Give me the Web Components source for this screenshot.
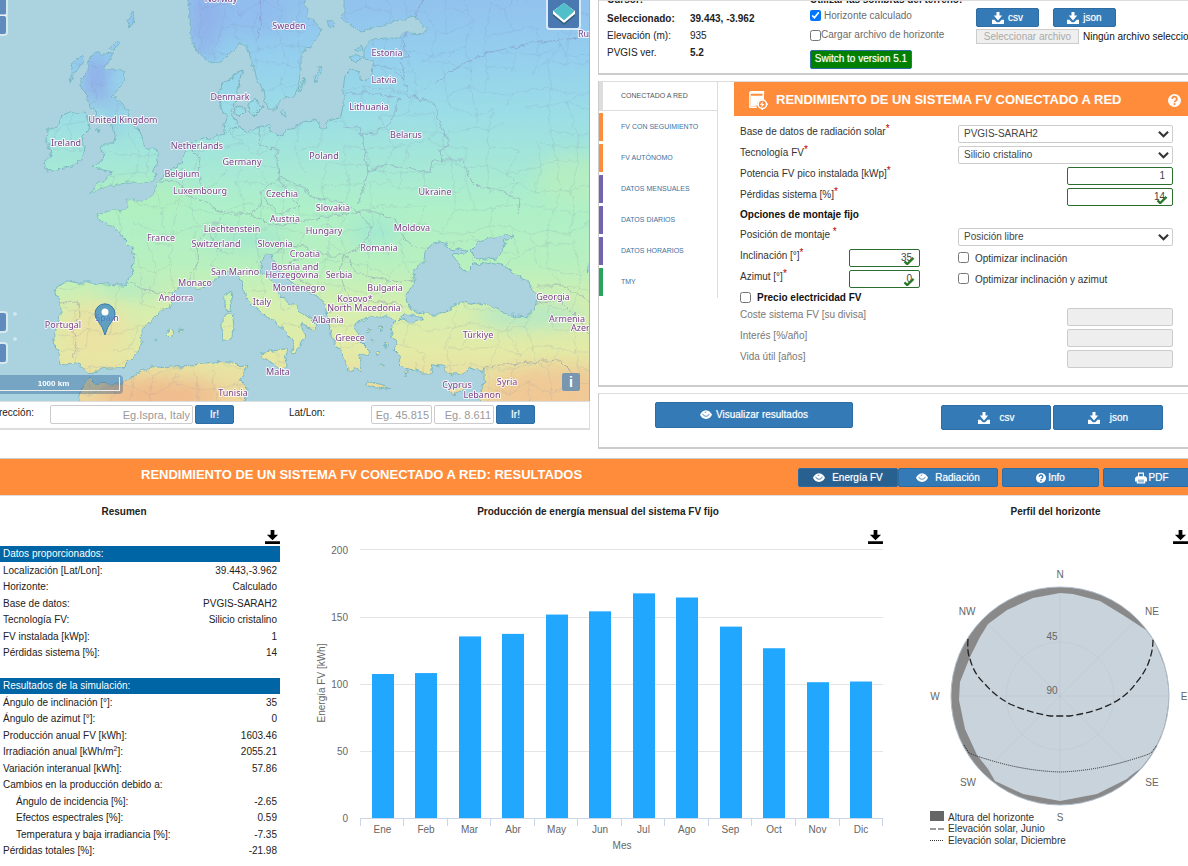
<!DOCTYPE html>
<html lang="es">
<head>
<meta charset="utf-8">
<title>PVGIS - Rendimiento de un sistema FV conectado a red</title>
<style>
  body { margin: 0; background: #fff; color: #222; font: 10px/14px "Liberation Sans", Arial, sans-serif; overflow-x: hidden; }
</style>
</head>
<body>
<pv-app></pv-app>
<script>
const define = (name, css, html, setup) => {
  const template = document.createElement('template');
  template.innerHTML = `<style>*{box-sizing:border-box}:host{display:block}${css}</style>${html}`;
  customElements.define(name, class extends HTMLElement {
    constructor() {
      super();
      this.attachShadow({ mode: 'open' }).append(template.content.cloneNode(true));
    }
    connectedCallback() { if (setup) setup(this, this.shadowRoot); }
  });
};

const ICONS = {
  tray: ['0 0 20 20', '<path d="M7.500 0h5v6H17l-7 8-7-8h4.500zM0 13h4l4 4h4l4-4h4v7H0z"/>'],
  save: ['0 0 16 15', '<path d="M6 0h4v5h4l-6 6-6-6h4zM0 12h16v3H0z"/>'],
  eye: ['0 0 20 20', '<path d="M10 2C5 2 1.500 6 0 9.500c1.500 3.500 5 7 10 7s8.500-3.500 10-7C18.500 6 15 2 10 2z"/><path d="M4.500 8a5.700 5.700 0 0 0 11 0M8 6.500a2.500 2.500 0 0 1 2.500-1.500" fill="none" stroke="var(--cut,#337ab7)" stroke-width="1.300"/>'],
  help: ['0 0 20 20', '<circle cx="10" cy="10" r="10"/><path d="M6.500 7.500a3.500 3.500 0 1 1 5 3.200q-1.500.8-1.500 2" fill="none" stroke="var(--cut,#337ab7)" stroke-width="2.800"/><circle cx="10" cy="15.500" r="1.700" fill="var(--cut,#337ab7)"/>'],
  print: ['0 0 20 20', '<path fill-rule="evenodd" d="M5 1h10v6h2l3 3v6h-3v3H3v-3H0v-6l3-3h2zM7 3v4h6V3zM5 13v1h10v-1zM5 16v1h10v-1z"/>'],
  chevron: ['0 0 12 8', '<path d="M1 1.500l5 5 5-5" fill="none" stroke="currentColor" stroke-width="2.200"/>'],
  check: ['0 0 12 10', '<path d="M1 6l3 3 7-7" fill="none" stroke="#2b7a2b" stroke-width="2.600"/>'],
  system: ['0 0 20 20', '<path d="M1 1h14v8M1 1v16h7" fill="none" stroke="currentColor" stroke-width="1.600"/><path d="M1 0h15v3H1zM2 5h13v3.500A7 7 0 0 0 8 16H2z"/><circle cx="14" cy="14" r="4.500" fill="none" stroke="currentColor" stroke-width="1.600"/><path d="M14.500 11l-3 3.600h2l-.6 3 3.300-4h-2z"/><path d="M14 8v2M14 18v2M8 14h2M18 14h2" stroke="currentColor" stroke-width="1.600"/>'],
  layers: ['0 0 30 30', '<path d="M4 16l11 9 11-9v-3l-11-8L4 13z" fill="#fff"/><path d="M4 17l11 9 11-9" fill="none" stroke="#37627c" stroke-width="1.400"/><path d="M5 13l9-7q1-1 2 0l9 7-9 8q-1 1-2 0z" fill="#50bfc9" stroke="#50bfc9" stroke-linejoin="round"/>']
};
define('pv-icon', ':host{display:inline-block;width:12px;height:12px;flex:none}svg{display:block;width:100%;height:100%;fill:currentColor}', '<svg aria-hidden="true"></svg>', (host, root) => {
  const [box, body] = ICONS[host.getAttribute('name')];
  const svg = root.querySelector('svg');
  svg.setAttribute('viewBox', box);
  svg.innerHTML = body;
});

define('pv-button', `
  :host{height:19px}
  button{display:flex;align-items:center;justify-content:center;gap:var(--gap,4px);width:100%;height:100%;margin:0;padding:0;
    border:1px solid #2e6da4;border-radius:2px;background:var(--fill,#337ab7);color:#fff;font:inherit;white-space:nowrap;cursor:pointer;text-shadow:0 0 1px #fff9}`,
  '<button type="button"><slot></slot></button>');

define('pv-panel', ':host{border:1px solid #ddd;border-bottom:2px solid #ccc;border-left-color:#ccc;border-right:0;overflow:hidden}', '<slot></slot>');

/* ---------- map ---------- */
const SEA = '#aad3df';
const MAINLAND = 'M188-5L190 10 189 25 192 35 192 43 196 50 203 59 213 64 222 61 230 53 241 42 244 44 248 50 252 62 256 75 262 88 263 92 265 102 267 109 276 109 278 103 284 97 294 96 298 86 301 70 301 55 305 50 312 45 318 38 322 30 316 22 307 16 306-5H344L344 12 340 18 350 25 360 32 375 27 395 22 413 16 420 24 428 29 425 33 407 32 400 38 385 38 370 40 364 50 364 57 373 62 372 75 367 82 361 80 357 72 351 70 345 76 343 90 343 105 341 115 330 120 325 127 320 127 315 120 303 122 290 129 280 134 277 136 270 130 268 124 258 127 248 133 240 128 235 122 232 112 219 108 219 92 222 83 232 78 236 72 242 70 240 86 235 92 233 104 232 112 226 117 224 128 225 134 215 137 205 139 196 141 188 146 183 158 178 167 170 170 163 178 157 181 156 190 152 195 144 201 134 203 133 200 126 199 127 208 122 211 114 209 108 212 98 213 97 218 104 223 112 226 121 234 124 240 131 247 133 260 132 270 130 280 126 285 118 285 108 284 90 283 78 283 68 281 62 284 54 289 56 296 60 303 60 315 57 328 53 343 57 347 59 363 68 364 75 362 82 366 88 375 97 370 108 368 122 368 134 356 143 344 140 338 144 328 156 315 170 307 173 300 172 292 180 286 190 287 200 289 214 281 222 275 232 272 238 275 243 290 251 303 262 312 273 320 285 330 292 340 295 347 291 353 297 352 304 338 301 324 309 328 316 330 317 325 312 320 300 311 294 304 288 303 278 291 272 280 262 272 260 262 265 256 272 254 273 260 280 270 290 281 305 290 318 296 325 304 327 318 331 330 333 340 336 346 345 360 347 368 352 370 356 368 360 373 361 362 358 354 368 357 370 351 361 342 355 330 357 322 365 320 375 317 388 317 397 320 392 325 391 335 396 345 393 350 398 355 400 363 405 368 415 370 420 373 430 373 432 366 442 367 452 375 462 374 470 367 482 371 484 368 484 380 480 410H600V-5Z';
const JUTLAND = 'M225 134L232 128 240 127 235 120 232 112 234 104 239 96 236 90 241 82 242 71 236 73 233 79 223 82 219 92 220 106 226 117 223 127Z';
const ISLANDS = [
  JUTLAND,
  'M94 53L106 53 113 54 108 62 103 70 115 70 125 71 124 80 118 90 112 97 122 102 127 110 128 120 138 128 142 140 145 149 154 149 159 155 157 163 152 172 156 174 152 180 140 183 128 183 118 184 108 187 96 190 90 194 97 184 105 178 113 172 103 170 92 166 100 162 105 155 100 148 103 144 113 144 115 138 113 130 112 124 97 118 96 110 90 108 88 95 80 87 80 80 88 72 88 63Z',
  'M60 118L66 112 76 113 85 112 90 120 89 130 82 137 84 147 82 160 70 166 58 170 47 172 44 162 52 156 50 150 46 142 47 128 58 126Z',
  'M77 410L82 388 90 377 96 383 110 384 122 384 140 372 155 366 175 367 190 365 205 364 215 363 228 362 235 362 240 367 247 364 243 375 241 380 247 390 244 410Z',
  'M261 353L270 351 288 350 285 358 286 366 282 369 272 362 262 357Z', 'M222 317L232 312 234 325 233 338 223 341 222 325Z', 'M224 297L231 291 232 302 229 311 224 305Z',
  'M365 382L375 383 391 387 380 389 366 385Z', 'M449 389L458 387 468 382 463 390 452 394Z', 'M165 333L171 329 174 333 169 337Z', 'M153 341L157 339 156 342Z', 'M178 328L183 329 179 331Z',
  'M127 20L133 12 134 18 130 28Z', 'M110 47L117 40 118 46 113 51Z', 'M73 62L82 56 83 62 73 76 70 82Z', 'M235 108L242 105 246 111 240 117 236 113Z', 'M248 104L256 98 262 108 254 116 249 112Z', 'M281 112L285 112 285 116 281 115Z', 'M315 75L320 66 322 70 316 82Z', 'M298 90L304 78 301 92Z', 'M349 57L358 53 364 58 354 62Z', 'M355 49L361 45 363 51Z', 'M327 22L333 20 334 25 329 27Z', 'M96 130L101 126 100 131Z',
  'M378 326l6 2-2 3zM384 343l5 2-4 2zM376 352l5 1-3 3zM404 373l5-3-4 7zM380 365l4 1-3 2zM370 340l4 3-3 1zM367 329l4 1-3 2z'
];
const LAKES = [
  'M440 242L447 246 452 251 460 249 468 250 464 253 452 254 459 262 462 270 468 271 474 265 485 263 490 262 500 264 512 271 524 280 533 287 537 300 534 310 525 317 510 315 495 308 480 302 472 304 460 303 450 308 440 314 424 314 410 309 405 296 413 285 415 270 424 262 425 252 433 243Z',
  'M470 251L478 243 490 238 505 235 514 234 506 240 504 250 497 259 485 260 478 259Z', 'M399 319L405 315 416 315 423 318 412 323Z', 'M586 270l5-5v10z'
];
const BORDERS = 'M258 127L260 145 277 150 280 178 260 192 270 205 280 214 300 205 290 195 278 178 M280 178L300 185 315 198 345 203 358 212 M260 192L262 205 250 214 225 214 208 230 215 245 222 252 M225 214L213 207 200 200 186 195 178 182 160 181 M188 146L200 158 198 172 202 190 M208 230L196 245 198 262 190 276 190 287 M130 283L145 290 160 293 172 294 M60 303L78 302 80 315 73 330 77 343 72 358 M250 214L270 225 300 222 315 218 340 215 358 212 372 228 362 245 345 255 325 255 305 247 290 245 272 254 M345 255L352 268 366 276 400 282 413 280 M345 255L340 272 345 290 352 300 328 312 M352 300L380 302 398 303 405 310 M305 258L290 262 300 280 315 288 M358 212L375 212 395 220 405 240 418 250 M358 205L368 172 365 150 360 127 343 126 M345 93L372 93 385 95 400 98 392 120 375 134 362 133 M373 64L390 68 405 78 408 96 432 102 437 115 450 145 440 150 442 160 465 160 468 176 478 186 500 190 520 200 518 215 M368 170L390 165 430 172 432 162 442 160 M408 57L403 42 418 10 425-5 M405 78L400 60 408 57 M435 83L460 65 490 52 540 42 580 38 M256 40L262 20 258-5 M484 368L500 365 530 362 560 360 575 375 M533 305L560 300 575 315 590 335 M537 285L560 285 590 300';
const LABELS = [
  ['Norway',221,2],['Sweden',289,29],['Estonia',387,56],['Latvia',384,83],['Lithuania',369,110],['Belarus',406,138],['United Kingdom',123,123],['Ireland',66,146],['Denmark',230,100],['Netherlands',197,149],['Germany',242,165],['Belgium',182,177],['Luxembourg',200,194],['Poland',324,159],['Ukraine',435,195],['Czechia',282,197],['Slovakia',333,211],['Austria',285,222],['Liechtenstein',232,232],['Hungary',324,234],['Moldova',412,231],['France',161,241],['Switzerland',216,247],['Slovenia',275,247],['Croatia',305,257],['Romania',379,251],['San Marino',235,275],['Bosnia and',295,270],['Herzegovina',292,278],['Serbia',339,278],['Monaco',195,286],['Montenegro',299,291],['Bulgaria',385,291],['Andorra',176,301],['Italy',262,305],['Kosovo*',355,302],['North Macedonia',364,311],['Georgia',553,300],['Spain',107,321],['Portugal',63,328],['Albania',328,323],['Armenia',567,322],['Greece',350,341],['Türkiye',478,338],['Malta',278,375],['Cyprus',457,388],['Syria',507,385],['Lebanon',482,398],['Tunisia',233,396]
];
define('pv-map', `
  :host{position:relative;overflow:hidden;border-right:1px solid #aaa}
  svg.map{display:block;width:100%;height:401px}
  text{font:9px "Noto Sans",sans-serif;fill:#7c3f88;text-anchor:middle;paint-order:stroke;stroke:#fffc;stroke-width:2px;stroke-linejoin:round}
  text.start{text-anchor:start}
  button{position:absolute;display:grid;place-items:center;margin:0;padding:0;border:0;background:#5f8bbd;color:#fff;border-radius:2px;box-shadow:0 0 0 2px #ffffff80;font:bold 14px/14px "Liberation Sans",sans-serif}
  .in{left:-13px;top:-5px;width:19px;height:20px}
  .out{left:-13px;top:16px;width:19px;height:18px}
  .pos{left:-13px;top:313px;width:19px;height:18px}
  .ext{left:-13px;top:344px;width:19px;height:18px}
  .layers{right:10px;top:-2px;width:31px;height:30px;background:#4a78b0;box-shadow:0 0 0 2px #ffffffa0}
  .layers pv-icon{width:30px;height:30px}
  .info{right:9px;top:373px;width:18px;height:18px;background:#7896b0;box-shadow:none}
  .scale{position:absolute;left:0;top:375px;width:123px;height:19px;padding:2px 3px 3px 0;background:#003c884d;border-radius:0 4px 4px 0}
  .scale div{height:14px;padding-right:12px;border:1px solid #eee;border-width:0 1px 1px 0;color:#fff;font:bold 8px/14px "Liberation Sans",sans-serif;text-align:center}`,
  `<svg class="map" viewBox="0 0 589 401" preserveAspectRatio="xMinYMin slice" role="img" aria-label="Mapa de Europa">
    <defs>
      <linearGradient id="heat" x1="0" y1="0" x2="0" y2="401" gradientUnits="userSpaceOnUse">
        <stop offset="0" stop-color="#92c2ee"/><stop offset=".14" stop-color="#94cfee"/><stop offset=".28" stop-color="#9bdde6"/><stop offset=".4" stop-color="#a4e7d8"/>
        <stop offset=".52" stop-color="#aef0c8"/><stop offset=".66" stop-color="#b8f0bf"/><stop offset=".76" stop-color="#d4efb0"/><stop offset=".88" stop-color="#e4eaa6"/><stop offset="1" stop-color="#efd59c"/>
      </linearGradient>
      <filter id="rough" x="-5%" y="-5%" width="110%" height="110%" color-interpolation-filters="sRGB"><feTurbulence type="fractalNoise" baseFrequency=".13" numOctaves="3" seed="4"/><feDisplacementMap in="SourceGraphic" scale="7" xChannelSelector="R" yChannelSelector="G"/></filter>
      <filter id="soft" x="-50%" y="-50%" width="200%" height="200%" color-interpolation-filters="sRGB"><feGaussianBlur stdDeviation="9"/></filter>
      <clipPath id="land"></clipPath>
    </defs>
    <rect width="700" height="401" fill="${SEA}"/>
    <g filter="url(#rough)">
      <g id="shapes" fill="url(#heat)" stroke="#7ab8c2"></g>
      <g clip-path="url(#land)">
        <g filter="url(#soft)">
          <ellipse cx="205" cy="22" rx="14" ry="38" fill="#8fa4e8" opacity=".6"/><ellipse cx="96" cy="80" rx="14" ry="26" fill="#8fa0e8" opacity=".7"/>
          <ellipse cx="250" cy="15" rx="40" ry="20" fill="#8fb2ee" opacity=".4"/><ellipse cx="115" cy="112" rx="9" ry="22" fill="#92b8ec" opacity=".5"/>
          <ellipse cx="245" cy="240" rx="42" ry="7" fill="#8cdcdc" opacity=".6"/><ellipse cx="375" cy="232" rx="26" ry="12" fill="#96e2da" opacity=".6"/>
          <ellipse cx="130" cy="288" rx="34" ry="6" fill="#9de5cf" opacity=".7"/><ellipse cx="530" cy="316" rx="55" ry="12" fill="#a5e6d0" opacity=".7"/>
          <ellipse cx="135" cy="200" rx="60" ry="18" fill="#b2f0bb" opacity=".7"/><ellipse cx="575" cy="180" rx="40" ry="26" fill="#bcf0b8" opacity=".6"/>
          <ellipse cx="95" cy="330" rx="34" ry="28" fill="#f0dea0" opacity=".7"/><ellipse cx="160" cy="395" rx="60" ry="16" fill="#f0b88c" opacity=".9"/><ellipse cx="560" cy="392" rx="70" ry="26" fill="#f0c494" opacity=".8"/>
        </g>
        <path id="mesh" fill="none" stroke="#7d86ad" stroke-opacity=".16"/>
        <path d="${BORDERS}" fill="none" stroke="#8080b0" stroke-opacity=".42"/>
      </g>
      <g id="water" fill="${SEA}" stroke="#7ab8c2"></g>
    </g>
    <g id="labels"></g>
    <text class="start" x="578" y="37">Russia</text><text class="start" x="571" y="331">Azerbaijan</text>
    <path d="M105 335q-2-8-7-14a10 10 0 1 1 14 0q-5 6-7 14z" fill="#3f8dc4" stroke="#3579aa" fill-opacity=".8"/><circle cx="105" cy="312" r="3.500" fill="#fff"/>
    <circle cx="15" cy="314" r="2" fill="#cfe6ee"/><circle cx="15" cy="339" r="2" fill="#cfe6ee"/>
  </svg>
  <button class="in" aria-label="Acercar"></button><button class="out" aria-label="Alejar"></button>
  <button class="pos" aria-label="Mi posición"></button><button class="ext" aria-label="Extensión"></button>
  <button class="layers" aria-label="Capas"><pv-icon name="layers"></pv-icon></button>
  <button class="info" aria-label="Información">i</button>
  <div class="scale"><div>1000 km</div></div>`,
  (host, root) => {
    const $ = id => root.getElementById(id);
    const paths = list => list.map(d => `<path d="${d}"/>`).join('');
    $('shapes').innerHTML = paths([MAINLAND, ...ISLANDS]);
    $('land').innerHTML = paths([MAINLAND, ...ISLANDS]);
    $('water').innerHTML = paths(LAKES);
    $('labels').innerHTML = LABELS.map(([t, x, y]) => `<text x="${x}" y="${y}">${t}</text>`).join('');
    // Province borders: a jittered grid with some edges left out.
    const noise = (i, j, k) => { const v = Math.sin(i * 127.1 + j * 311.7 + k * 74.7) * 43758.5; return v - Math.floor(v); };
    const at = (i, j) => [i * 21 + noise(i, j, 1) * 17, j * 20 + noise(i, j, 2) * 16].map(Math.round).join(' ');
    let d = '';
    for (let i = -1; i < 30; i++) for (let j = -1; j < 21; j++) {
      if (noise(i, j, 3) > .2) d += `M${at(i, j)}L${at(i + 1, j)}`;
      if (noise(i, j, 4) > .3) d += `M${at(i, j)}L${at(i, j + 1)}`;
    }
    $('mesh').setAttribute('d', d);
  });

define('pv-location', `
  form{display:flex;align-items:center;height:29px;padding-bottom:1px;border:1px solid #ddd;border-width:1px 1px 2px 0;color:#222}
  .address{display:flex;justify-content:flex-end;width:34px;margin-right:16px;overflow:hidden;white-space:nowrap;padding-bottom:3px}
  .coords{margin-left:55px;width:82px;padding-bottom:3px}
  input{height:19px;min-width:0;margin:0 2px 0 0;padding:0 2px;border:1px solid #ccc;border-radius:2px;font:11px "Liberation Sans",sans-serif;text-align:right}
  input::placeholder{color:#999;opacity:1}
  pv-button{width:39px}
  .a{width:143px}.b{width:61px}.c{width:60px}`,
  `<form><label class="address" for="a">Dirección:</label><input class="a" id="a" placeholder="Eg.Ispra, Italy"><pv-button>Ir!</pv-button>
  <label class="coords" for="b">Lat/Lon:</label><input class="b" id="b" placeholder="Eg. 45.815"><input class="c" aria-label="Longitud" placeholder="Eg. 8.611"><pv-button>Ir!</pv-button></form>`);

define('pv-status', `
  :host{display:grid;grid-template-columns:83px 120px 166px minmax(0,1fr);margin-top:-11px;padding:0 0 4px 8px;white-space:nowrap}
  dl{display:grid;grid-column:span 2;grid-template:20px repeat(3,17px)/83px 1fr;align-items:center;margin:0;align-content:start}
  dt,dd{margin:0}
  .terrain{display:grid;grid-template-rows:20px 11px 28px 20px;align-items:center;justify-items:start}
  label{display:flex;align-items:center;color:#6b6b6b}
  input{width:11px;height:11px;margin:0}
  .gap{gap:3px}
  .terrain pv-button{width:102px;--fill:#008000}
  .files{padding-top:18px;overflow:hidden}
  .pair{display:flex;gap:14px;margin-bottom:2px}
  .pair pv-button{width:63px}
  .file{display:flex;align-items:center;gap:4px;color:#111}
  .file button{width:103px;height:15px;padding:0;border:1px solid #ccc;background:#efefef;color:#aaa;font:inherit;line-height:12px;flex:none}`,
  `<dl><dt><b>Cursor:</b></dt><dd></dd><dt><b>Seleccionado:</b></dt><dd><b>39.443, -3.962</b></dd><dt>Elevación (m):</dt><dd>935</dd><dt>PVGIS ver.</dt><dd><b>5.2</b></dd></dl>
  <div class="terrain"><b>Utilizar las sombras del terreno:</b>
    <label class="gap"><input type="checkbox" checked>Horizonte calculado</label>
    <label><input type="checkbox">Cargar archivo de horizonte</label>
    <pv-button>Switch to version 5.1</pv-button></div>
  <div class="files"><div class="pair"><pv-button><pv-icon name="tray"></pv-icon>csv</pv-button><pv-button><pv-icon name="tray"></pv-icon>json</pv-button></div>
    <div class="file"><button type="button" disabled>Seleccionar archivo</button><span>Ningún archivo seleccionado</span></div></div>`);

define('pv-tabs', `
  nav{display:flex;flex-direction:column;gap:3px;border-right:1px solid #ddd;padding-bottom:2px}
  a{display:flex;align-items:center;height:28px;padding-left:18px;border-left:5px solid var(--c);border-radius:2px 0 0 2px;color:#44709c;text-decoration:none;font-size:7px;white-space:nowrap}
  a.on{color:#555;border-radius:0;box-shadow:0 1px #ddd}`,
  `<nav><a class="on" href="#red" style="--c:#ddd">CONECTADO A RED</a><a href="#seg" style="--c:#ff8c3b">FV CON SEGUIMIENTO</a><a href="#aut" style="--c:#ff8c3b">FV AUTÓNOMO</a>
  <a href="#men" style="--c:#7464b0">DATOS MENSUALES</a><a href="#dia" style="--c:#7464b0">DATOS DIARIOS</a><a href="#hor" style="--c:#7464b0">DATOS HORARIOS</a><a href="#tmy" style="--c:#28a55a">TMY</a></nav>`);

define('pv-system-form', `
  h2{display:flex;align-items:center;gap:8px;height:34px;margin:0 0 7px;padding:2px 7px 0 15px;background:#ff8c3b;color:#fff;font:bold 13px/16px "Liberation Sans",sans-serif;white-space:nowrap}
  h2 pv-icon{width:19px;height:19px}
  h2 pv-icon:last-child{width:13px;height:13px;margin-left:auto;--cut:#ff8c3b}
  form{display:grid;grid-template-columns:1fr 1fr 215px;grid-template-rows:repeat(4,21px) 19px repeat(3,21px) 17px;grid-auto-rows:21px;align-items:center;padding:0 15px 0 6px;white-space:nowrap}
  label{color:#333}
  .l{padding-bottom:4px}
  .l.w{grid-column:span 2}
  i{position:relative;top:-3px;color:#b00;font-style:normal}
  h3{grid-column:1/-1;margin:0;padding-bottom:4px;font:bold 10px/14px "Liberation Sans",sans-serif;color:#111}
  input:not([type=checkbox]),select{display:block;width:100%;height:18px;margin:0;border:1px solid #ccc;border-radius:2px;background:#fff;color:#444;font:inherit;appearance:none}
  input:not([type=checkbox]){padding:0 7px;text-align:right}
  select{padding:0 5px}
  .box{position:relative}
  .box pv-icon{position:absolute;right:4px;top:5px;width:11px;height:8px;color:#333}
  .box pv-icon[name=check]{right:5px;top:7px;width:12px;height:9px}
  .num{width:106px;justify-self:end}
  .tilt{width:71px}
  .ok input{border-color:#2b6e2f!important}
  input:disabled{background:#eee!important}
  input[type=checkbox]{width:11px;height:11px;margin:0}
  .opt{display:flex;align-items:center;gap:6px}
  .opt span{padding-top:2px}
  .price{grid-column:1/-1;display:flex;gap:6px;align-items:center;font-weight:bold;color:#111;height:14px}
  .muted{color:#777}`,
  `<h2><pv-icon name="system"></pv-icon>RENDIMIENTO DE UN SISTEMA FV CONECTADO A RED<pv-icon name="help"></pv-icon></h2>
  <form>
    <label class="l w" for="db">Base de datos de radiación solar<i>*</i></label><div class="box"><select id="db"><option>PVGIS-SARAH2</option></select><pv-icon name="chevron"></pv-icon></div>
    <label class="l w" for="te">Tecnología FV<i>*</i></label><div class="box"><select id="te"><option>Silicio cristalino</option></select><pv-icon name="chevron"></pv-icon></div>
    <label class="l w" for="po">Potencia FV pico instalada [kWp]<i>*</i></label><div class="box num ok"><input id="po" value="1"></div>
    <label class="l w" for="pe">Pérdidas sistema [%]<i>*</i></label><div class="box num ok"><input id="pe" value="14"><pv-icon name="check"></pv-icon></div>
    <h3>Opciones de montaje fijo</h3>
    <label class="l w" for="mo">Posición de montaje <i>*</i></label><div class="box"><select id="mo"><option>Posición libre</option></select><pv-icon name="chevron"></pv-icon></div>
    <label class="l" for="in">Inclinación [°]<i>*</i></label><div class="box tilt ok"><input id="in" value="35"><pv-icon name="check"></pv-icon></div><label class="opt"><input type="checkbox"><span>Optimizar inclinación</span></label>
    <label class="l" for="az">Azimut [°]<i>*</i></label><div class="box tilt ok"><input id="az" value="0"><pv-icon name="check"></pv-icon></div><label class="opt"><input type="checkbox"><span>Optimizar inclinación y azimut</span></label>
    <label class="price"><input type="checkbox">Precio electricidad FV</label>
    <label class="l w muted" for="co">Coste sistema FV [su divisa]</label><div class="num"><input id="co" disabled></div>
    <label class="l w muted" for="it">Interés [%/año]</label><div class="num"><input id="it" disabled></div>
    <label class="l w muted" for="vi">Vida útil [años]</label><div class="num"><input id="vi" disabled></div>
  </form>`);

define('pv-actions', `
  :host{display:flex;justify-content:space-between;padding:8px 25px 17px 56px}
  .show{width:198px;height:26px}
  div{display:flex;gap:2px;padding-top:3px}
  div pv-button{width:110px;height:25px;--gap:10px}`,
  `<pv-button class="show"><pv-icon name="eye"></pv-icon>Visualizar resultados</pv-button>
  <div><pv-button><pv-icon name="tray"></pv-icon>csv</pv-button><pv-button><pv-icon name="tray"></pv-icon>json</pv-button></div>`);

/* ---------- results ---------- */
define('pv-card', `
  h3{margin:0;padding-right:var(--shift,0);font:bold 10px/32px "Liberation Sans",sans-serif;text-align:center;color:#222}
  div{display:flex;justify-content:flex-end;height:18px;padding:2px var(--inset,0) 0 0;color:#000}
  pv-icon{width:15px;height:14px}`,
  '<h3><slot name="title"></slot></h3><div><pv-icon name="save"></pv-icon></div><slot></slot>');

const SUMMARY = [['h', 'Datos proporcionados:', ''], ['', 'Localización [Lat/Lon]:', '39.443,-3.962'], ['', 'Horizonte:', 'Calculado'], ['', 'Base de datos:', 'PVGIS-SARAH2'], ['', 'Tecnología FV:', 'Silicio cristalino'], ['', 'FV instalada [kWp]:', '1'], ['', 'Pérdidas sistema [%]:', '14'], ['', '', ''],
  ['h', 'Resultados de la simulación:', ''], ['', 'Ángulo de inclinación [°]:', '35'], ['', 'Ángulo de azimut [°]:', '0'], ['', 'Producción anual FV [kWh]:', '1603.46'], ['', 'Irradiación anual [kWh/m<sup>2</sup>]:', '2055.21'], ['', 'Variación interanual [kWh]:', '57.86'], ['', 'Cambios en la producción debido a:', ''], ['sub', 'Ángulo de incidencia [%]:', '-2.65'], ['sub', 'Efectos espectrales [%]:', '0.59'], ['sub', 'Temperatura y baja irradiancia [%]:', '-7.35'], ['', 'Pérdidas totales [%]:', '-21.98']];
define('pv-summary', `
  table{width:100%;border-collapse:collapse;white-space:nowrap;color:#222}
  tr{height:16px}tr:nth-child(even){height:17px}
  th,td{padding:0 3px;font-weight:normal;text-align:left;line-height:14px}
  td{text-align:right}
  .h{background:#0065a4;color:#fff}
  .sub th{padding-left:16px}
  sup{font-size:7px;line-height:0}`,
  `<table>${SUMMARY.map(([c, a, b]) => `<tr class="${c}">${c === 'h' ? `<th colspan="2">${a}</th>` : `<th scope="row">${a}</th><td>${b}</td>`}</tr>`).join('')}</table>`);

const MONTHS = [['Ene', 107.3], ['Feb', 108], ['Mar', 135.3], ['Abr', 137.2], ['May', 151.6], ['Jun', 154], ['Jul', 167.4], ['Ago', 164.3], ['Sep', 142.6], ['Oct', 126.5], ['Nov', 101.2], ['Dic', 101.7]];
define('pv-bars', `
  svg{display:block;width:100%;overflow:visible}
  text{font:10px "Liberation Sans",sans-serif;fill:#666;text-anchor:middle}
  .y{text-anchor:end}`,
  `<svg viewBox="0 0 576 320" role="img" aria-label="Energía FV por mes">
    <path d="M50 3.500H573M50 71.500H573M50 138.500H573M50 205.500H573" stroke="#e4e4e4"/>
    ${[0, 50, 100, 150, 200].map(v => `<text class="y" x="38" y="${276 - Math.round(v * 1.342)}">${v}</text>`).join('')}
    ${MONTHS.map(([m, v], i) => { const x = 72.5 + i * 43.5, h = v * 1.342; return `<rect x="${Math.round(x - 11)}" y="${272 - h}" width="22" height="${h}" fill="#22a7ff"/><text x="${x}" y="287">${m}</text>`; }).join('')}
    <path d="M50 272.500H573${Array.from({ length: 13 }, (_, i) => `M${Math.floor(50 + i * 43.55) + .5} 272v8`).join('')}" stroke="#ccd6eb" fill="none"/>
    <text x="312" y="303">Mes</text><text transform="translate(15 137) rotate(-90)">Energía FV [kWh]</text>
  </svg>`);

define('pv-horizon', `
  svg{display:block;width:100%;overflow:visible}
  text{font:10px "Liberation Sans",sans-serif;fill:#666;text-anchor:middle}
  .k{text-anchor:start;fill:#333}`,
  `<svg viewBox="-137 -150 265 320" role="img" aria-label="Perfil del horizonte">
    <circle r="109" fill="#898989"/>
    <path d="M0-103L13-102 40-95 63-81 86-66 95-54 104-31 109 0 103 34 87 64 67 83 37 98 0 105-37 98-65 85-72 73-83 59-95 33-101 4-100-14-90-39-80-59-72-72-53-86-27-98z" fill="#c8d3dc"/>
    <path d="M104-31A109 109 0 0 1 80 73L70 80 60 0z" fill="#c8d3dc"/>
    <circle r="109" fill="none" stroke="#aebdca"/>
    <g fill="none" stroke="#8c98a3" stroke-opacity=".1"><circle r="54"/><path d="M0-109V109M-109 0H109M-77-77L77 77M-77 77L77-77"/></g>
    <g fill="none" stroke="#222"><path d="M-92-57Q-93-43-90-37-86-22-76-13-65 0-50 8-32 16-10 20L10 20Q35 16 51 8 67 0 76-13 87-26 90-38 93-46 93-57" stroke-width="1.300" stroke-dasharray="7 3"/>
    <path d="M-96 49L-91 57Q-85 60-60 67-30 75 0 76 30 75 60 67 85 60 91 57L97 49" stroke-dasharray="1 1"/></g>
    <text x="0" y="-118">N</text><text x="92" y="-81">NE</text><text x="-93" y="-81">NW</text><text x="-125" y="4">W</text><text x="124" y="4">E</text><text x="-92" y="90">SW</text><text x="92" y="90">SE</text><text x="0" y="125">S</text><text x="-8" y="-56">45</text><text x="-8" y="-2">90</text>
    <rect x="-130" y="115" width="14" height="10" fill="#666"/><path d="M-130 133h14" stroke="#333" stroke-dasharray="6 2"/><path d="M-130 144.500h14" stroke="#333" stroke-dasharray="1 1"/>
    <text class="k" x="-112" y="125">Altura del horizonte</text><text class="k" x="-112" y="136">Elevación solar, Junio</text><text class="k" x="-112" y="148">Elevación solar, Diciembre</text>
  </svg>`);

define('pv-results', `
  :host{margin-top:9px}
  header{display:flex;height:38px;padding:9px 0 0 141px;border-top:1px solid #ccc;border-bottom:1px solid #ddd;background:#ff8c3b;overflow:hidden;white-space:nowrap}
  h2{margin:0 auto 0 0;color:#fff;font:bold 13px/14px "Liberation Sans",sans-serif}
  nav{display:flex;gap:4px;margin-right:-12px}
  nav div{display:flex}
  pv-button{width:97px}
  nav div pv-button{width:100px;--gap:7px}
  .on{--fill:#286090;--cut:#286090}
  .tight{--gap:2px}
  .grid{display:grid;grid-template-columns:280px minmax(0,1fr) 265px}
  .sum{--shift:32px}
  .chart{padding:0 37px 0 30px;--inset:3px}`,
  `<header><h2>RENDIMIENTO DE UN SISTEMA FV CONECTADO A RED: RESULTADOS</h2>
    <nav><div><pv-button class="on"><pv-icon name="eye"></pv-icon>Energía FV</pv-button><pv-button><pv-icon name="eye"></pv-icon>Radiación</pv-button></div>
    <pv-button class="tight"><pv-icon name="help" style="width:10px;height:10px"></pv-icon>Info</pv-button><pv-button class="tight"><pv-icon name="print"></pv-icon>PDF</pv-button></nav></header>
  <div class="grid">
    <pv-card class="sum"><span slot="title">Resumen</span><pv-summary></pv-summary></pv-card>
    <pv-card class="chart"><span slot="title">Producción de energía mensual del sistema FV fijo</span><pv-bars></pv-bars></pv-card>
    <pv-card><span slot="title">Perfil del horizonte</span><pv-horizon></pv-horizon></pv-card>
  </div>`);

define('pv-app', `
  .top{display:grid;grid-template-columns:minmax(0,1fr) minmax(0,1fr);gap:8px}
  .side{display:flex;flex-direction:column;gap:6px}
  .system{display:grid;grid-template-columns:120px minmax(0,1fr);column-gap:16px;align-items:start;padding-bottom:16px;margin-left:-1px}`,
  `<div class="top"><section><pv-map></pv-map><pv-location></pv-location></section>
    <section class="side"><pv-panel><pv-status></pv-status></pv-panel>
      <pv-panel><div class="system"><pv-tabs></pv-tabs><pv-system-form></pv-system-form></div></pv-panel>
      <pv-panel><pv-actions></pv-actions></pv-panel></section></div>
  <pv-results></pv-results>`);
</script>
</body>
</html>
